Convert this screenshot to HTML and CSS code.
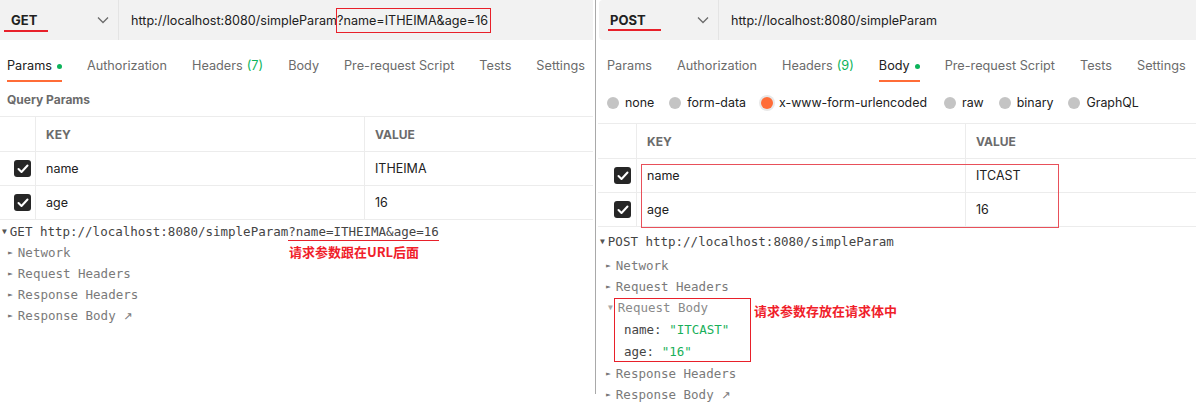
FILE: index.html
```html
<!DOCTYPE html>
<html>
<head>
<meta charset="utf-8">
<link rel="stylesheet" href="styles.css">
</head>
<body>
<div class="page">
  <section class="panel left">
    <div class="bar">
      <div class="method"><span class="mname">GET</span><svg class="chev" width="12" height="8" viewBox="0 0 12 8"><path d="M1 1.5l5 5 5-5" fill="none" stroke="#6b6b6b" stroke-width="1.3"/></svg></div>
      <div class="url">http://localhost:8080/simpleParam<span class="hl">?name=ITHEIMA&amp;age=16</span></div>
    </div>
    <nav class="tabs">
      <span class="tab active">Params<i class="dot"></i></span>
      <span class="tab">Authorization</span>
      <span class="tab">Headers <em>(7)</em></span>
      <span class="tab">Body</span>
      <span class="tab">Pre-request Script</span>
      <span class="tab">Tests</span>
      <span class="tab">Settings</span>
    </nav>
    <div class="sub">Query Params</div>
    <div class="table">
      <div class="row head"><div class="c0"></div><div class="c1">KEY</div><div class="c2">VALUE</div></div>
      <div class="row"><div class="c0"><span class="cb"><svg width="12" height="10" viewBox="0 0 12 10"><path d="M1.5 5l3 3 6-6.5" fill="none" stroke="#fff" stroke-width="2" stroke-linecap="round" stroke-linejoin="round"/></svg></span></div><div class="c1">name</div><div class="c2">ITHEIMA</div></div>
      <div class="row"><div class="c0"><span class="cb"><svg width="12" height="10" viewBox="0 0 12 10"><path d="M1.5 5l3 3 6-6.5" fill="none" stroke="#fff" stroke-width="2" stroke-linecap="round" stroke-linejoin="round"/></svg></span></div><div class="c1">age</div><div class="c2">16</div></div>
    </div>
    <div class="console">
      <div class="line main"><span class="tri">▼</span>GET http://localhost:8080/simpleParam<span class="ul">?name=ITHEIMA&amp;age=16</span></div>
      <div class="line sub1"><span class="tri">►</span>Network</div>
      <div class="line sub1"><span class="tri">►</span>Request Headers</div>
      <div class="line sub1"><span class="tri">►</span>Response Headers</div>
      <div class="line sub1"><span class="tri">►</span>Response Body <span class="arrow">↗</span></div>
      <div class="note note-left">请求参数跟在URL后面</div>
    </div>
  </section>
  <div class="divider"></div>
  <section class="panel right">
    <div class="bar rbar">
      <div class="method"><span class="mname">POST</span><svg class="chev" width="12" height="8" viewBox="0 0 12 8"><path d="M1 1.5l5 5 5-5" fill="none" stroke="#6b6b6b" stroke-width="1.3"/></svg></div>
      <div class="url">http://localhost:8080/simpleParam</div>
    </div>
    <nav class="tabs">
      <span class="tab">Params</span>
      <span class="tab">Authorization</span>
      <span class="tab">Headers <em>(9)</em></span>
      <span class="tab active">Body<i class="dot"></i></span>
      <span class="tab">Pre-request Script</span>
      <span class="tab">Tests</span>
      <span class="tab">Settings</span>
    </nav>
    <div class="radios">
      <span class="radio"><i class="rc"></i>none</span>
      <span class="radio"><i class="rc"></i>form-data</span>
      <span class="radio"><i class="rc on"></i>x-www-form-urlencoded</span>
      <span class="radio"><i class="rc"></i>raw</span>
      <span class="radio"><i class="rc"></i>binary</span>
      <span class="radio"><i class="rc"></i>GraphQL</span>
    </div>
    <div class="table rtable">
      <div class="row head"><div class="c0"></div><div class="c1">KEY</div><div class="c2">VALUE</div></div>
      <div class="row"><div class="c0"><span class="cb"><svg width="12" height="10" viewBox="0 0 12 10"><path d="M1.5 5l3 3 6-6.5" fill="none" stroke="#fff" stroke-width="2" stroke-linecap="round" stroke-linejoin="round"/></svg></span></div><div class="c1">name</div><div class="c2">ITCAST</div></div>
      <div class="row"><div class="c0"><span class="cb"><svg width="12" height="10" viewBox="0 0 12 10"><path d="M1.5 5l3 3 6-6.5" fill="none" stroke="#fff" stroke-width="2" stroke-linecap="round" stroke-linejoin="round"/></svg></span></div><div class="c1">age</div><div class="c2">16</div></div>
      <div class="redbox"></div>
    </div>
    <div class="console rconsole">
      <div class="line main first"><span class="tri">▼</span>POST http://localhost:8080/simpleParam</div>
      <div class="line sub1"><span class="tri">►</span>Network</div>
      <div class="line sub1"><span class="tri">►</span>Request Headers</div>
      <div class="bodygroup">
        <div class="boxed">
          <div class="line sub1 inbox"><span class="tri gray">▼</span>Request Body</div>
          <div class="line kv">name: <span class="str">"ITCAST"</span></div>
          <div class="line kv">age: <span class="str">"16"</span></div>
        </div>
        <div class="note">请求参数存放在请求体中</div>
      </div>
      <div class="line sub1 after"><span class="tri">►</span>Response Headers</div>
      <div class="line sub1"><span class="tri">►</span>Response Body <span class="arrow">↗</span></div>
    </div>
  </section>
</div>
</body>
</html>
```

FILE: styles.css
```css
* { box-sizing: border-box; }
body {
  margin: 0;
  background: #fff;
  font-family: Inter, "Noto Sans", sans-serif;
  color: #212121;
}
.page {
  display: flex;
  width: 1196px;
  height: 416px;
}
.panel { position: relative; }
.left { width: 593px; }
.divider {
  width: 1px;
  height: 394px;
  background: #a9a9a9;
  margin: 0 2px 0 2px;
}
.right { width: 598px; }

.bar {
  display: flex;
  align-items: center;
  height: 40px;
  background: #f2f2f2;
  font-size: 12.6px;
}
.rbar {
  margin-left: 1px;
  border-radius: 4px 0 0 4px;
}
.method {
  position: relative;
  display: flex;
  align-items: center;
  justify-content: space-between;
  width: 119px;
  height: 100%;
  padding: 0 9px 0 11px;
  border-right: 1px solid #e4e4e4;
}
.rbar .method { width: 120px; padding-left: 11px; padding-right: 9px; }
.mname {
  font-weight: 700;
  color: #212121;
  font-size: 13px;
}
.mname::after {
  content: "";
  position: absolute;
  left: 4px;
  top: 30px;
  width: 44px;
  height: 2px;
  background: #e8202a;
}
.rbar .mname::after { left: 9px; top: 29px; width: 53px; }
.url {
  padding-left: 12px;
  color: #212121;
}
.hl {
  outline: 1.5px solid #e8202a;
  outline-offset: 0;
  padding: 4px 2px 4px 0;
}

.tabs {
  display: flex;
  gap: 25px;
  height: 42px;
  padding: 18px 0 0 7px;
  font-size: 12.7px;
  color: #6b6b6b;
}
.right .tabs { padding-left: 9px; }
.tab {
  position: relative;
  display: inline-flex;
  align-items: flex-start;
  height: 24px;
  white-space: nowrap;
}
.tab em { font-style: normal; color: #0cb35a; margin-left: 4px; }
.tab.active { color: #212121; }
.tab.active::after {
  content: "";
  position: absolute;
  left: 0;
  right: 0;
  bottom: 0;
  height: 2px;
  background: #ff6c37;
}
.dot {
  width: 5px;
  height: 5px;
  border-radius: 50%;
  background: #0cb35a;
  margin: 6px 0 0 5px;
}

.sub {
  height: 34px;
  padding: 10px 0 0 7px;
  font-size: 12px;
  font-weight: 700;
  color: #6b6b6b;
}

.table {
  position: relative;
  border-top: 1px solid #ececec;
}
.row {
  display: flex;
  height: 34px;
  border-bottom: 1px solid #ececec;
  font-size: 12.5px;
  align-items: stretch;
}
.row.head { height: 35px; font-size: 12px; font-weight: 700; color: #6b6b6b; }
.c0 {
  width: 36px;
  display: flex;
  align-items: center;
  padding-left: 9px;
  justify-content: flex-start;
  border-right: 1px solid #ececec;
}
.c1 {
  width: 329px;
  display: flex;
  align-items: center;
  padding-left: 10px;
  border-right: 1px solid #ececec;
}
.c2 {
  flex: 1;
  display: flex;
  align-items: center;
  padding-left: 10px;
}
.cb {
  display: inline-flex;
  align-items: center;
  justify-content: center;
  width: 17px;
  height: 17px;
  border-radius: 3px;
  background: #262626;
  margin-left: 5px;
}
.radios {
  display: flex;
  align-items: center;
  height: 41px;
  padding: 0 0 0 9px;
  gap: 15px;
  font-size: 12.4px;
  color: #212121;
}
.radio { display: inline-flex; align-items: center; }
.rc {
  width: 12px;
  height: 12px;
  border-radius: 50%;
  background: #c4c4c4;
  margin-right: 6px;
}
.rc.on {
  background: #ff6c37;
  box-shadow: 0 0 0 2px #e8e8e8;
}
.radio:nth-child(4) { margin-left: 2px; }
.rtable .c0 { width: 39px; padding-left: 10px; }
.rtable .c0 .cb { margin-left: 6px; }
.redbox {
  position: absolute;
  left: 43px;
  top: 40px;
  width: 418px;
  height: 64px;
  border: 1.5px solid #e8505a;
}

.console {
  position: relative;
  padding-top: 1px;
  font-family: "DejaVu Sans Mono", "Liberation Mono", monospace;
  font-size: 12.5px;
  color: #7a7a7a;
}
.line {
  height: 21px;
  line-height: 21px;
  white-space: nowrap;
}
.main { color: #444; padding-left: 2px; }
.main .tri { font-size: 8px; margin-right: 3px; vertical-align: 2px; color: #555; }
.sub1 { padding-left: 8px; }
.tri { display: inline-block; font-size: 8px; margin-right: 5px; vertical-align: 2px; color: #777; }
.tri.gray { color: #aaa; }
.ul { border-bottom: 1.5px solid #e8202a; padding-bottom: 1px; }
.arrow { font-family: "DejaVu Sans", sans-serif; font-size: 11px; }
.note {
  font-family: "Noto Sans CJK SC", sans-serif;
  font-weight: 700;
  font-size: 13px;
  color: #f0202a;
  white-space: nowrap;
}
.note-left {
  position: absolute;
  left: 289px;
  top: 23px;
  line-height: 17px;
}
.rconsole { padding-top: 4px; }
.rconsole .main { padding-left: 2px; }
.rconsole .first { margin-bottom: 3px; }
.bodygroup {
  display: flex;
  align-items: flex-start;
  margin-top: 1px;
}
.boxed {
  margin-left: 16px;
  border: 1.5px solid #e8202a;
  width: 137px;
  height: 64px;
}
.boxed .inbox { padding-left: 0; margin-left: -7px; color: #8a8a8a; height: 20px; line-height: 18px; }
.rconsole .kv { color: #444; padding-left: 9px; height: 22px; line-height: 22px; }
.str { color: #19b05a; }
.bodygroup .note { margin: 3px 0 0 3px; }
.rconsole .after { margin-top: 1px; }
```
